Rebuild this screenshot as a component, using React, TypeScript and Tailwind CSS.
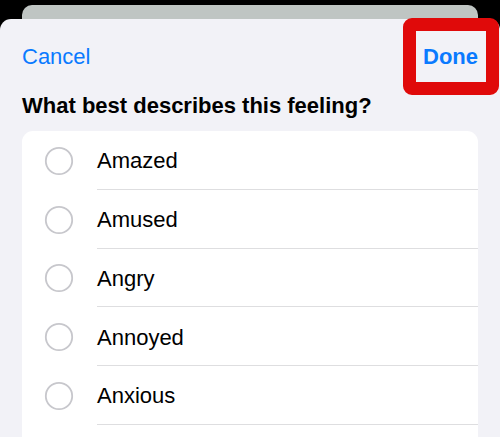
import React from "react";

const items = ["Amazed", "Amused", "Angry", "Annoyed", "Anxious"];

function Radio() {
  return (
    <svg width="30" height="30" viewBox="0 0 30 30" className="shrink-0">
      <circle cx="15" cy="15" r="13.2" fill="none" stroke="#c7c7cc" strokeWidth="1.8" />
    </svg>
  );
}

export default function App() {
  return (
    <div
      className="w-[500px] h-[437px] bg-black overflow-hidden"
      style={{ fontFamily: '"Liberation Sans", Arial, sans-serif' }}
    >
      <div className="mt-[5px] mx-[22px] h-[30px] rounded-t-[10px] bg-[#bfc5c3]" />
      <div className="relative -mt-[16px] h-[500px] rounded-t-[11px] bg-[#f2f2f7]">
        <div className="flex h-[75px] items-center justify-between px-[22px]">
          <span className="text-[22px] leading-[22px] text-[#0a7aff]">Cancel</span>
          <span className="text-[22px] leading-[22px] font-bold text-[#0a7aff]">Done</span>
        </div>
        <div className="pointer-events-none absolute left-[403px] top-[-1px] h-[77px] w-[96px] rounded-[9px] border-[13px] border-[#e00a0a]" />
        <div className="px-[22px] pt-[1px] text-[22px] leading-[22px] font-bold text-black">
          What best describes this feeling?
        </div>
        <div className="mx-[22px] mt-[14px] h-[340px] rounded-[11px] bg-white">
          {items.map((it) => (
            <div key={it} className="flex h-[58.75px] items-center">
              <div className="ml-[22px] pt-[1px]">
                <Radio />
              </div>
              <div className="ml-[23px] flex h-full flex-1 items-center border-b border-[#dedee0]">
                <span className="pt-[3px] text-[22px] leading-[22px] text-black">{it}</span>
              </div>
            </div>
          ))}
        </div>
      </div>
    </div>
  );
}
